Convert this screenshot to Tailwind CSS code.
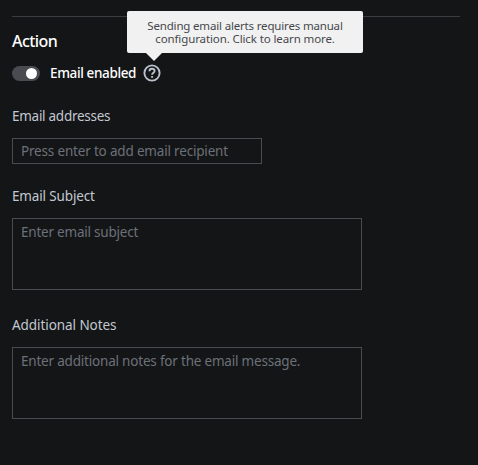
<!DOCTYPE html>
<html lang="en">
<head>
<meta charset="utf-8">
<title>Alert action</title>
<script src="https://cdn.jsdelivr.net/npm/@tailwindcss/browser@4"></script>
</head>
<body class="h-[465px] overflow-hidden bg-[#141517] px-3 pt-4 font-['Noto_Sans',sans-serif] text-[13.5px] leading-5 text-[#c2c8d0]">
<main class="flex flex-col items-start">
  <hr class="w-[448px] border-0 border-t border-[#3b3c3f]">
  <h2 class="mt-3 h-6 text-[16px] leading-6 font-medium tracking-[-0.55px] whitespace-nowrap text-white"><span>Action</span></h2>
  <div class="mt-2.5 flex h-5 items-center">
    <button aria-label="Email enabled" class="flex h-[15px] w-7 items-center justify-end rounded-full bg-[#494b50] pr-[3px]"><span class="size-[11px] rounded-full bg-white"></span></button>
    <span class="ml-2.5 w-[93px] font-medium tracking-[-0.37px] whitespace-nowrap text-white">Email enabled</span>
    <div class="relative size-[18px]">
      <svg class="size-[18px]" viewBox="0 0 18 18" fill="none" stroke="#b8c0cb" stroke-width="1.9"><circle cx="9" cy="9" r="7.6"/><path d="M6.4 7.3C6.4 5.7 7.4 4.8 9 4.8S11.6 5.7 11.6 7.1C11.6 8.8 9.1 8.8 9.1 10.8M9.1 11.9v1.8"/></svg>
      <div role="tooltip" class="absolute -top-[53px] -left-4 h-[42px] w-[236px] rounded-[2px] bg-[#f1f1f1] pt-2 text-center text-[11.5px] leading-[13px] whitespace-nowrap text-[#46484c]">
        <p class="h-[13px] tracking-[-0.17px]">Sending email alerts requires manual</p>
        <p class="h-[13px] tracking-[-0.11px]">configuration. Click to learn more.</p>
        <svg class="absolute top-[41px] left-[18px] h-[9px] w-[18px]" viewBox="0 0 18 9" fill="#f1f1f1"><path d="M0 0H18L9 9Z"/></svg>
      </div>
    </div>
  </div>
  <label class="mt-[23px] tracking-[-0.27px]">Email addresses</label>
  <input class="mt-3 h-[26px] w-[250px] border border-[#494b4e] px-2 tracking-[-0.18px] placeholder:text-[#6b7178] placeholder:opacity-100" placeholder="Press enter to add email recipient">
  <label class="mt-[22px] tracking-[-0.15px]">Email Subject</label>
  <textarea class="mt-3 h-[72px] w-[350px] resize-none border border-[#494b4e] px-2 py-[3px] tracking-[-0.22px] placeholder:text-[#6b7178]" placeholder="Enter email subject"></textarea>
  <label class="mt-[25px] tracking-[-0.07px]">Additional Notes</label>
  <textarea class="mt-3 h-[72px] w-[350px] resize-none border border-[#494b4e] px-2 py-[3px] tracking-[-0.2px] placeholder:text-[#6b7178]" placeholder="Enter additional notes for the email message."></textarea>
</main>
</body>
</html>
